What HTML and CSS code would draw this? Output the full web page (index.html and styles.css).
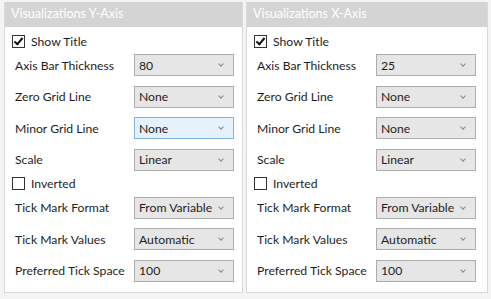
FILE: index.html
```html
<!DOCTYPE html>
<html lang="en">
<head>
    <meta charset="UTF-8">
    <title>Visualizations Axis</title>
    <link rel="stylesheet" href="styles.css">
</head>
<body>
    <div class="panels">
        <div class="panel panel-y">
            <div class="panel-header">Visualizations Y-Axis</div>
            <div class="panel-body">
                <label class="check-row"><span class="box checked"></span>Show Title</label>
                <div class="row"><span class="label">Axis Bar Thickness</span><div class="select"><span>80</span><i class="chev"></i></div></div>
                <div class="row"><span class="label">Zero Grid Line</span><div class="select"><span>None</span><i class="chev"></i></div></div>
                <div class="row"><span class="label">Minor Grid Line</span><div class="select hover"><span>None</span><i class="chev"></i></div></div>
                <div class="row"><span class="label">Scale</span><div class="select"><span>Linear</span><i class="chev"></i></div></div>
                <label class="check-row"><span class="box"></span>Inverted</label>
                <div class="row"><span class="label">Tick Mark Format</span><div class="select"><span>From Variable</span><i class="chev"></i></div></div>
                <div class="row"><span class="label">Tick Mark Values</span><div class="select"><span>Automatic</span><i class="chev"></i></div></div>
                <div class="row"><span class="label">Preferred Tick Space</span><div class="select"><span>100</span><i class="chev"></i></div></div>
            </div>
        </div>
        <div class="panel panel-x">
            <div class="panel-header">Visualizations X-Axis</div>
            <div class="panel-body">
                <label class="check-row"><span class="box checked"></span>Show Title</label>
                <div class="row"><span class="label">Axis Bar Thickness</span><div class="select"><span>25</span><i class="chev"></i></div></div>
                <div class="row"><span class="label">Zero Grid Line</span><div class="select"><span>None</span><i class="chev"></i></div></div>
                <div class="row"><span class="label">Minor Grid Line</span><div class="select"><span>None</span><i class="chev"></i></div></div>
                <div class="row"><span class="label">Scale</span><div class="select"><span>Linear</span><i class="chev"></i></div></div>
                <label class="check-row"><span class="box"></span>Inverted</label>
                <div class="row"><span class="label">Tick Mark Format</span><div class="select"><span>From Variable</span><i class="chev"></i></div></div>
                <div class="row"><span class="label">Tick Mark Values</span><div class="select"><span>Automatic</span><i class="chev"></i></div></div>
                <div class="row"><span class="label">Preferred Tick Space</span><div class="select"><span>100</span><i class="chev"></i></div></div>
            </div>
        </div>
    </div>
</body>
</html>
```
FILE: styles.css
```css
body {
    margin: 0;
    background: #f4f4f4;
    font-family: Lato, "Noto Sans", sans-serif;
    font-size: 12.2px;
    color: #1e1e1e;
}
.panels {
    display: flex;
    gap: 3px;
    padding: 2px 0 0 4px;
}
.panel {
    background: #fff;
    border: 1px solid #d9d9d9;
    border-top: none;
}
.panel-y {
    width: 237px;
}
.panel-x {
    width: 240px;
}
.panel-header {
    height: 25px;
    line-height: 24px;
    background: #d4d4d4;
    color: #fff;
    padding-left: 6px;
    font-size: 12.5px;
}
.panel-body {
    padding: 6px 0 5px 0;
}
.check-row {
    display: flex;
    align-items: center;
    height: 16.3px;
    padding-left: 7px;
}
.box {
    width: 11px;
    height: 11px;
    border: 1px solid #333;
    background: #fff;
    margin-right: 6px;
    position: relative;
}
.box.checked::after {
    content: "";
    position: absolute;
    left: 3px;
    top: 0px;
    width: 3px;
    height: 7px;
    border: solid #111;
    border-width: 0 2px 2px 0;
    transform: rotate(40deg);
}
.row {
    display: flex;
    align-items: center;
    height: 31.6px;
    padding-left: 10px;
}
.label {
    width: 119px;
}
.select {
    box-sizing: border-box;
    width: 100px;
    height: 22px;
    border: 1px solid #adadad;
    background: #e6e6e6;
    display: flex;
    align-items: center;
    justify-content: space-between;
    padding: 0 10px 0 4px;
}
.select.hover {
    background: #e5f1fb;
    border-color: #7eb4ea;
}
.chev {
    width: 3px;
    height: 3px;
    border: solid #888;
    border-width: 0 1px 1px 0;
    transform: rotate(45deg);
    margin-top: -2px;
}
```
